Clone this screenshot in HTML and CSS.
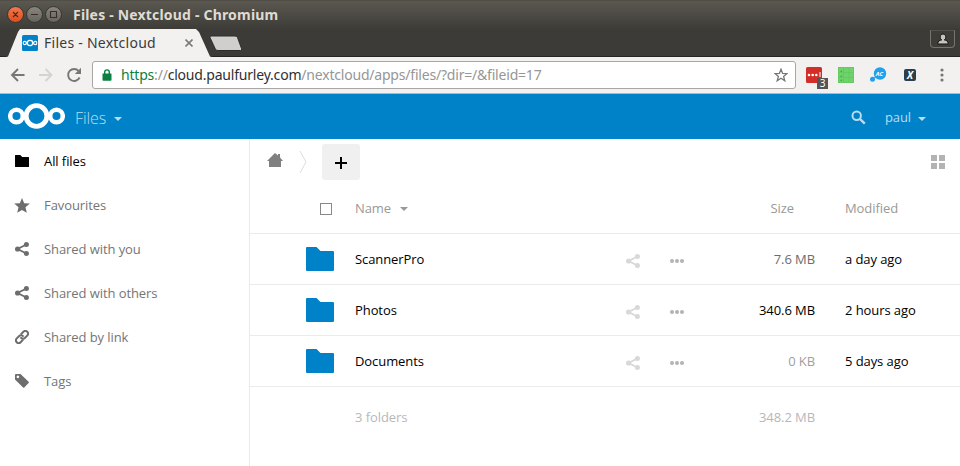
FILE: index.html
```html
<!DOCTYPE html>
<html lang="en">
<head>
<meta charset="utf-8">
<title>Files - Nextcloud</title>
<link rel="stylesheet" href="styles.css">
</head>
<body>
<svg class="defs" aria-hidden="true">
  <symbol id="share" viewBox="0 0 14 14"><path d="M11.5 2.5 2.5 7l9 4.5" fill="none" stroke="currentColor" stroke-width="1.9"/><circle cx="11.4" cy="2.6" r="2.5"/><circle cx="2.6" cy="7" r="2.6"/><circle cx="11.4" cy="11.4" r="2.5"/></symbol>
  <symbol id="dots" viewBox="0 0 14 14"><circle cx="2" cy="7" r="2"/><circle cx="7" cy="7" r="2"/><circle cx="12" cy="7" r="2"/></symbol>
  <symbol id="folder" viewBox="0 0 28 24"><path d="M1 0h9.5l4 4H27q1 0 1 1v18q0 1-1 1H1q-1 0-1-1V1q0-1 1-1z"/></symbol>
  <symbol id="rings" viewBox="0 0 57 26"><g fill="none" stroke="#fff"><circle cx="28.5" cy="13" r="10.4" stroke-width="4.9"/><circle cx="8.5" cy="13" r="6.3" stroke-width="4.5"/><circle cx="48.5" cy="13" r="6.3" stroke-width="4.5"/></g></symbol>
</svg>

<div class="titlebar">
  <svg class="controls" width="58" height="17" viewBox="0 0 58 17">
    <defs>
      <linearGradient id="close" x2="0" y2="1"><stop stop-color="#f4794d"/><stop offset="1" stop-color="#df4c1c"/></linearGradient>
      <linearGradient id="grey" x2="0" y2="1"><stop stop-color="#898780"/><stop offset="1" stop-color="#65635c"/></linearGradient>
    </defs>
    <g stroke="#35342f"><circle cx="8.5" cy="8.5" r="8" fill="url(#close)"/><circle cx="27.5" cy="8.5" r="8" fill="url(#grey)"/><circle cx="46.5" cy="8.5" r="8" fill="url(#grey)"/></g>
    <path d="m6 6 5 5m0-5-5 5M24 8.5h7M43.5 5.5h6v6h-6z" fill="none" stroke="#3a2d25" stroke-width="1.1"/>
  </svg>
  <span class="window-title">Files - Nextcloud - Chromium</span>
</div>

<div class="tabstrip">
  <div class="tab">
    <svg class="favicon" width="16" height="16"><rect width="16" height="16" rx="1.5" fill="#0082c9"/><use href="#rings" x=".5" y="4.5" width="15" height="7"/></svg>
    <span class="tab-title">Files - Nextcloud</span>
    <svg width="8" height="8"><path d="m.5.5 7 7m0-7-7 7" stroke="#7b7b7b" stroke-width="1.6"/></svg>
  </div>
  <svg class="newtab" width="34" height="17"><path d="M2 1h24q2 0 2.500 1.500l4 11q.7 2-1 2H9q-2 0-2.700-1.500L1 2.500Q.5 1 2 1z" fill="#d0cfcd" stroke="#2e2d29"/></svg>
  <div class="profile"><svg width="12" height="12"><path d="M6 1c3.400 0 3.400 5.200 1.300 5.900 2.300.3 3.900 1.300 3.900 4.100H.8c0-2.800 1.600-3.800 3.900-4.100C2.600 6.200 2.600 1 6 1z" fill="#c6c4bf" stroke="#151513"/></svg></div>
</div>

<div class="toolbar">
  <svg class="nav" width="72" height="16" viewBox="0 0 72 16" fill="none" stroke-width="1.9">
    <path d="M14.500 8H2m6-6L2 8l6 6" stroke="#777"/><path d="M29 8h12.500m-6-6 6 6-6 6" stroke="#d4d3d2"/>
    <path d="M69.600 10.500A6 6 0 1 1 68.700 4" stroke="#777"/><path d="M71 .8v6.200h-6.200z" fill="#777"/>
  </svg>
  <div class="omnibox">
    <svg width="10" height="12"><path d="M1 4.500h8q.5 0 .5.500v6q0 .8-.8.800H1.300Q.5 11.800.5 11V5q0-.5.5-.5z" fill="#0b8043"/><path d="M2.700 5V3.200a2.300 2.300 0 0 1 4.600 0V5" fill="none" stroke="#0b8043" stroke-width="1.400"/></svg>
    <span class="url"><span class="secure">https</span>://<span class="host">cloud.paulfurley.com</span>/nextcloud/apps/files/?dir=/&amp;fileid=17</span>
    <svg width="14" height="14" viewBox="0 0 14 14"><path d="m7 1.200 1.600 4.200 4.400.2-3.400 2.800 1.200 4.400L7 10.300l-3.800 2.500 1.200-4.400L1 5.600l4.400-.2z" fill="none" stroke="#777" stroke-width="1.300"/></svg>
  </div>
  <div class="extensions">
    <div class="ext-pass"><svg width="16" height="16"><rect width="16" height="16" rx="1.500" fill="#d32d27"/><g fill="#fff"><circle cx="3" cy="8" r="1.300"/><circle cx="6.700" cy="8" r="1.300"/><circle cx="10.300" cy="8" r="1.300"/><path d="M13.500 5h1v5h-1z"/></g></svg><span class="badge">3</span></div>
    <svg width="16" height="16"><path fill="#6fd36b" d="M0 0h16v16H0z"/><path d="M.5.500h15v15H.5zM5.500 1v14M1 5.500h14M1 10.500h14M11 1v14" fill="none" stroke="#62c95f" stroke-width=".8"/><path d="m2 5 2-2v2zm0 5 2-2v2zm0 4 2-2v2z" fill="#43a548"/></svg>
    <svg width="17" height="16"><circle cx="10" cy="6.500" r="6.200" fill="#22a0eb"/><circle cx="2.500" cy="12.300" r="2.500" fill="#22a0eb"/><path d="M4 11l3-2" stroke="#22a0eb"/><text x="5.700" y="9" class="ext-ac">AC</text></svg>
    <span class="ext-x">X</span>
    <svg class="menu" width="4" height="14" fill="#777"><circle cx="2" cy="2" r="1.600"/><circle cx="2" cy="7" r="1.600"/><circle cx="2" cy="12" r="1.600"/></svg>
  </div>
</div>

<header class="header">
  <svg class="logo" width="57" height="26"><use href="#rings"/></svg>
  <span class="app-name">Files</span><i class="caret"></i>
  <svg class="search" width="15" height="15"><circle cx="5.700" cy="5.700" r="4.200" fill="none" stroke="#b9dcf0" stroke-width="2"/><path d="m8.800 8.800 5 4.800" stroke="#b9dcf0" stroke-width="2.400"/></svg>
  <span class="user">paul</span><i class="caret"></i>
</header>

<div class="content">
  <nav class="sidebar">
    <a class="active"><svg width="14" height="12" viewBox="0 0 28 24" preserveAspectRatio="none"><use href="#folder" width="28" height="24"/></svg>All files</a>
    <a><svg width="16" height="15" viewBox="0 0 16 15"><path d="m8 0 2.200 5.200 5.600.4-4.300 3.700 1.300 5.500L8 11.900l-4.800 2.900 1.300-5.500L.2 5.600l5.600-.4z"/></svg>Favourites</a>
    <a><svg width="14" height="14"><use href="#share"/></svg>Shared with you</a>
    <a><svg width="14" height="14"><use href="#share"/></svg>Shared with others</a>
    <a><svg width="14" height="14" viewBox="0 0 14 14" fill="none" stroke="currentColor" stroke-width="2"><g transform="rotate(-45 7 7)"><path d="M6 9.700H2.300a2.700 2.700 0 0 1 0-5.400h3.400a2.700 2.700 0 0 1 2.500 3.500"/><path d="M8 4.300h3.700a2.700 2.700 0 0 1 0 5.400H8.300a2.700 2.700 0 0 1-2.500-3.500"/></g></svg>Shared by link</a>
    <a><svg width="14" height="14"><path fill-rule="evenodd" d="M1 0h4.500l8.100 7.800q.6.600 0 1.200l-4.300 4.500q-.6.600-1.200 0L0 5.500V1q0-1 1-1zm1.900 1.600a1.300 1.300 0 1 0 .01 0z"/></svg>Tags</a>
  </nav>

  <main class="files">
    <div class="crumbs">
      <svg class="home" width="16" height="14"><path d="M8 0l3 2.600V1h2v3.400L16 8h-2v6H2V8H0z"/></svg>
      <svg class="sep" width="9" height="24"><path d="m1 1 6 11-6 11" fill="none" stroke="#ddd"/></svg>
      <button class="add" aria-label="New"><svg width="12" height="12"><path d="M5 0h2v5h5v2H7v5H5V7H0V5h5z"/></svg></button>
      <svg class="grid" width="14" height="14"><path d="M0 0h6v6H0zM8 0h6v6H8zM0 8h6v6H0zM8 8h6v6H8z"/></svg>
    </div>
    <div class="row head"><span class="pick"><i class="check"></i></span><span class="name">Name<i class="caret"></i></span><span class="size">Size</span><span class="date">Modified</span></div>
    <div class="row"><span class="pick"><svg width="28" height="24"><use href="#folder"/></svg></span><span class="name">ScannerPro</span><svg class="act share"><use href="#share"/></svg><svg class="act"><use href="#dots"/></svg><span class="size small">7.6 MB</span><span class="date">a day ago</span></div>
    <div class="row"><span class="pick"><svg width="28" height="24"><use href="#folder"/></svg></span><span class="name">Photos</span><svg class="act share"><use href="#share"/></svg><svg class="act"><use href="#dots"/></svg><span class="size">340.6 MB</span><span class="date">2 hours ago</span></div>
    <div class="row"><span class="pick"><svg width="28" height="24"><use href="#folder"/></svg></span><span class="name">Documents</span><svg class="act share"><use href="#share"/></svg><svg class="act"><use href="#dots"/></svg><span class="size empty">0 KB</span><span class="date">5 days ago</span></div>
    <div class="row summary"><span class="pick"></span><span class="name">3 folders</span><span class="size">348.2 MB</span><span class="date"></span></div>
  </main>
</div>
</body>
</html>
```
FILE: styles.css
```css
* { box-sizing: border-box; }
body { margin: 0; width: 960px; height: 466px; overflow: hidden; background: #fff; font: 13px/20px "Open Sans", sans-serif; letter-spacing: -.08px; color: #000; }
svg { display: block; flex: none; }
.defs { position: absolute; width: 0; height: 0; }

.titlebar { display: flex; align-items: center; height: 29px; padding-left: 7px; background: linear-gradient(#45443f 0, #5b5850 1px, #3e3d38 28px); }
.window-title { margin-left: 8px; color: #dfdbd2; font: bold 14px/20px "Noto Sans", sans-serif; letter-spacing: .19px; white-space: nowrap; }

.tabstrip { display: flex; height: 28px; padding: 0 6px; background: #3c3b37; border-bottom: 1px solid #262521; }
.tab { display: flex; align-items: center; width: 206px; height: 28px; padding-left: 16px; background: #f2f1f0; clip-path: polygon(0 100%, 2px 98%, 12px 3px, 14px 0, 190px 0, 193px 3px, 204px 98%, 206px 100%); }
.tab-title { width: 141px; margin-left: 6px; color: #3b3b3b; font: 14px/20px "Noto Sans", sans-serif; letter-spacing: .25px; white-space: nowrap; }
.newtab { margin: 6px 0 0 -3px; }
.profile { display: flex; justify-content: center; width: 25px; height: 18px; margin: 1px -1px 0 auto; padding-top: 2px; border: 1px solid #77756e; border-top-color: #55534d; border-radius: 0 0 4px 4px; background: #3e3d38; }

.toolbar { display: flex; align-items: center; height: 37px; padding-left: 10px; background: #f2f1f0; border-bottom: 1px solid #b8b7b5; }
.omnibox { display: flex; align-items: center; width: 704px; height: 28px; margin-left: 10px; padding: 0 7px 0 9px; background: #fff; border: 1px solid #a9a8a6; border-radius: 3px; }
.url { flex: 1; margin-left: 9px; color: #969696; font: 14px/20px "Noto Sans", sans-serif; letter-spacing: -.2px; white-space: nowrap; }
.secure { color: #0b8043; }
.host { color: #303030; }
.extensions { display: flex; align-items: center; margin-left: 10px; gap: 16px; }
.ext-pass { position: relative; }
.badge { position: absolute; left: 11px; top: 11px; width: 11px; height: 11px; background: #555; color: #fff; font: 10px/11px "Noto Sans", sans-serif; text-align: center; }
.ext-ac { fill: #fff; font: italic bold 6px "Open Sans", sans-serif; }
.ext-x { width: 12px; height: 12px; margin-left: 1px; border-radius: 2px; background: #2b3e4c; color: #fff; font: italic bold 10px/12px "Open Sans", sans-serif; text-align: center; }
.menu { margin-left: 8px; }

.header { display: flex; align-items: center; height: 45px; padding: 0 34px 0 8px; background: #0082c9; color: #b9dcf0; }
.logo { margin-top: -1px; }
.app-name { margin: 3px 0 0 10px; font-size: 16px; font-weight: 300; }
.caret { width: 0; height: 0; border: 4px solid transparent; border-top-color: currentColor; border-bottom: 0; }
.header .caret { margin: 4px 0 0 8px; }
.search { margin: 1px 0 0 auto; }
.user { margin-left: 19px; }
.header .user + .caret { margin-left: 7px; }

.content { display: flex; height: 327px; }
.sidebar { width: 250px; border-right: 1px solid #ebebeb; }
.sidebar a { display: flex; align-items: center; height: 44px; padding-left: 15px; color: #757575; }
.sidebar svg { margin-right: 15px; fill: #6d6d6d; color: #6d6d6d; }
.sidebar a:nth-child(2) svg { margin: 0 14px 0 -1px; }
.sidebar a:nth-child(5) svg { fill: none; }
.sidebar .active, .sidebar .active svg { color: #000; fill: #000; }

.files { flex: 1; }
.crumbs { display: flex; align-items: center; height: 45px; padding: 0 15px 0 17px; }
.home { fill: #808080; margin-top: -3px; }
.sep { margin-left: 16px; }
.add { display: flex; align-items: center; justify-content: center; width: 38px; height: 36px; margin-left: 14px; padding: 2px 0 0; border: 0; border-radius: 3px; background: #f0f0f0; }
.grid { margin-left: auto; fill: #b3b3b3; }
.row { display: flex; align-items: center; height: 51px; border-bottom: 1px solid #ebebeb; }
.head { height: 50px; padding-bottom: 1px; color: #999; }
.pick { width: 105px; padding-left: 56px; fill: #0082c9; }
.check { display: block; width: 12px; height: 12px; margin: 1px 0 0 14px; border: 1px solid #888; }
.name { display: flex; align-items: center; flex: 1; }
.name .caret { margin: 1px 0 0 9px; }
.act { width: 14px; height: 14px; margin: 3px 0 0 30px; fill: #b3b3b3; }
.share { margin-left: 0; fill: #d8d8d8; color: #d8d8d8; }
.size { width: 131px; text-align: right; }
.head .size { padding-right: 21px; }
.small { color: #6c6c6c; }
.empty { color: #a0a0a0; }
.date { width: 115px; margin-left: 30px; }
.summary { height: 60px; border: 0; color: #b8b8b8; }
```
